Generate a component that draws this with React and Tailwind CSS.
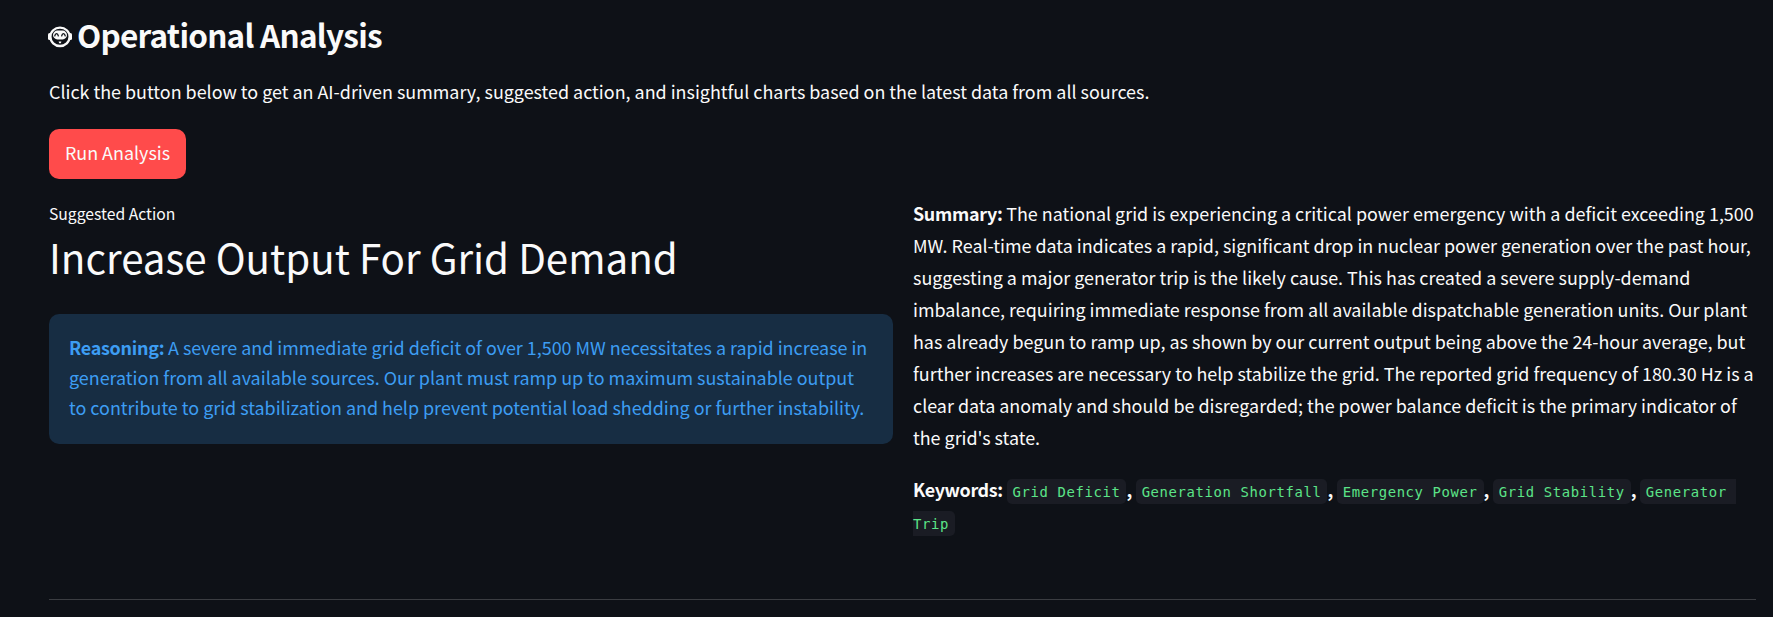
import React from "react";

const summary = [
  "The national grid is experiencing a critical power emergency with a deficit exceeding 1,500",
  "MW. Real-time data indicates a rapid, significant drop in nuclear power generation over the past hour,",
  "suggesting a major generator trip is the likely cause. This has created a severe supply-demand",
  "imbalance, requiring immediate response from all available dispatchable generation units. Our plant",
  "has already begun to ramp up, as shown by our current output being above the 24-hour average, but",
  "further increases are necessary to help stabilize the grid. The reported grid frequency of 180.30 Hz is a",
  "clear data anomaly and should be disregarded; the power balance deficit is the primary indicator of",
  "the grid's state.",
];

const reasoning = [
  "A severe and immediate grid deficit of over 1,500 MW necessitates a rapid increase in",
  "generation from all available sources. Our plant must ramp up to maximum sustainable output",
  "to contribute to grid stabilization and help prevent potential load shedding or further instability.",
];

const keywords = [
  "Grid Deficit",
  "Generation Shortfall",
  "Emergency Power",
  "Grid Stability",
  <>Generator&nbsp;<wbr />Trip</>,
];

function RobotIcon() {
  return (
    <svg viewBox="0 0 24 22" className="h-[22px] w-6 shrink-0" fill="none">
      <rect x="0" y="7" width="3" height="7" rx="1.5" fill="#fafafa" />
      <rect x="21" y="7" width="3" height="7" rx="1.5" fill="#fafafa" />
      <ellipse cx="12" cy="10.8" rx="9.6" ry="9.2" stroke="#fafafa" strokeWidth="2.3" />
      <rect x="5" y="4.6" width="14" height="8.8" rx="4.4" fill="#fafafa" />
      <path d="M6.8 9.8c.5-2.8 3-2.8 3.5 0M13.7 9.8c.5-2.8 3-2.8 3.5 0" stroke="#0e1117" strokeWidth="1.3" strokeLinecap="round" />
      <path d="M10.6 15.4h2.8l-.6 1.8h-1.6z" fill="#fafafa" />
    </svg>
  );
}

export default function App() {
  return (
    <main className="h-[617px] w-full overflow-hidden bg-[#0e1117] pl-[49px] pr-[17px] font-['Noto_Sans_CJK_SC',sans-serif] text-[17.91px] text-[#fafafa]">
      <header className="-ml-px flex h-[74px] items-center gap-[5px]">
        <RobotIcon />
        <h2 className="whitespace-nowrap pb-[7px] text-[31.5px] leading-[42px] font-semibold tracking-[-0.75px]">Operational Analysis</h2>
      </header>
      <p className="mt-px h-[34px] whitespace-nowrap leading-8">
        Click the button below to get an AI-driven summary, suggested action, and insightful charts based on the latest data from all sources.
      </p>
      <button className="mt-5 flex h-[50px] w-[137px] items-center justify-center rounded-[10px] bg-[#ff4b4b] pb-[3px] whitespace-nowrap">
        Run Analysis
      </button>
      <div className="mt-[18px] grid grid-cols-[844px_843px] gap-5">
        <section>
          <div className="mt-[2px] h-[30px] text-[15.7px] leading-[30px]">Suggested Action</div>
          <div className="h-[60px] whitespace-nowrap text-[40.3px] leading-[56px]">Increase Output For Grid Demand</div>
          <div className="mt-[25px] h-[130px] rounded-[10px] bg-[#172d43] px-5 py-[18px] leading-[30px] text-[#3d9df3]">
            {reasoning.map((line, i) => (
              <div key={i} className="whitespace-nowrap">
                {i === 0 && <strong className="font-semibold tracking-[-0.25px]">Reasoning: </strong>}
                {line}
              </div>
            ))}
          </div>
        </section>
        <section className="leading-8">
          {summary.map((line, i) => (
            <div key={i} className="whitespace-nowrap">
              {i === 0 && <strong className="font-semibold tracking-[-0.3px]">Summary: </strong>}
              {line}
            </div>
          ))}
          <p className="mt-5 h-16 font-semibold tracking-[-0.35px]">
            Keywords:{" "}
            {keywords.map((word, i) => (
              <React.Fragment key={i}>
                <code className="rounded-[5px] bg-[#1a1c24] px-[6px] pt-[4.5px] pb-[4.5px] align-[0.5px] font-['DejaVu_Sans_Mono',monospace] text-[13.9px] leading-none font-normal tracking-[0.63px] text-[#5ce488]">
                  {word}
                </code>
                {i < keywords.length - 1 && ", "}
              </React.Fragment>
            ))}
          </p>
        </section>
      </div>
      <hr className="mt-[62px] border-[#3b3d42]" />
    </main>
  );
}
